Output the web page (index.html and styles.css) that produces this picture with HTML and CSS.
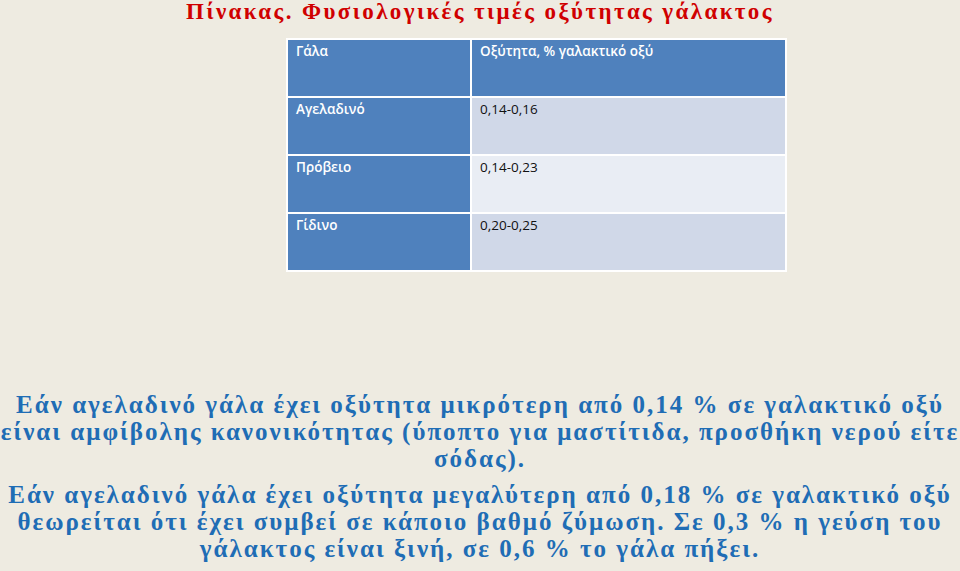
FILE: index.html
```html
<!DOCTYPE html>
<html lang="el">
<head>
<meta charset="utf-8">
<link rel="stylesheet" href="styles.css">
</head>
<body>
<div class="slide">
  <h1 class="title">Πίνακας. Φυσιολογικές τιμές οξύτητας γάλακτος</h1>
  <table class="acid">
    <tr class="head"><td class="c1">Γάλα</td><td class="c2">Οξύτητα, % γαλακτικό οξύ</td></tr>
    <tr class="odd"><td class="c1">Αγελαδινό</td><td class="c2">0,14-0,16</td></tr>
    <tr class="even"><td class="c1">Πρόβειο</td><td class="c2">0,14-0,23</td></tr>
    <tr class="odd"><td class="c1">Γίδινο</td><td class="c2">0,20-0,25</td></tr>
  </table>
  <div class="notes">
    <p>Εάν αγελαδινό γάλα έχει οξύτητα μικρότερη από 0,14 % σε γαλακτικό οξύ είναι αμφίβολης κανονικότητας (ύποπτο για μαστίτιδα, προσθήκη νερού είτε σόδας).</p>
    <p>Εάν αγελαδινό γάλα έχει οξύτητα μεγαλύτερη από 0,18 % σε γαλακτικό οξύ θεωρείται ότι έχει συμβεί σε κάποιο βαθμό ζύμωση. Σε 0,3 % η γεύση του γάλακτος είναι ξινή, σε 0,6 % το γάλα πήξει.</p>
  </div>
</div>
</body>
</html>
```
FILE: styles.css
```css
html, body {
  margin: 0;
  padding: 0;
  background: #eeebe1;
}
.slide {
  width: 960px;
  height: 571px;
  overflow: hidden;
  display: flex;
  flex-direction: column;
}
.title {
  margin: 0;
  padding-top: 1px;
  height: 38px;
  text-align: center;
  font-family: "Liberation Serif", serif;
  font-weight: bold;
  font-size: 23px;
  letter-spacing: 2.4px;
  line-height: 22px;
  color: #d00000;
}
.acid {
  margin-left: 286px;
  width: 501px;
  border-collapse: collapse;
  font-family: "Open Sans", sans-serif;
  font-size: 13.5px;
}
.acid td {
  border: 2px solid #ffffff;
  height: 54px;
  padding: 2px 8px 0 8px;
  vertical-align: top;
  line-height: 18px;
}
.acid .c1 {
  width: 166px;
  background: #4f81bd;
  color: #ffffff;
  font-weight: 600;
}
.acid .c2 {
  color: #111111;
}
.acid .head .c2 {
  background: #4f81bd;
  color: #ffffff;
  font-weight: 600;
}
.acid .odd .c2 { background: #d0d8e8; }
.acid .even .c2 { background: #e9edf4; }
.notes {
  margin-top: 119px;
  padding: 0;
  font-family: "Liberation Serif", serif;
  font-weight: bold;
  font-size: 25px;
  letter-spacing: 2px;
  line-height: 27px;
  color: #1f6db5;
  text-align: center;
}
.notes p {
  margin: 0 0 9px 0;
}
```
